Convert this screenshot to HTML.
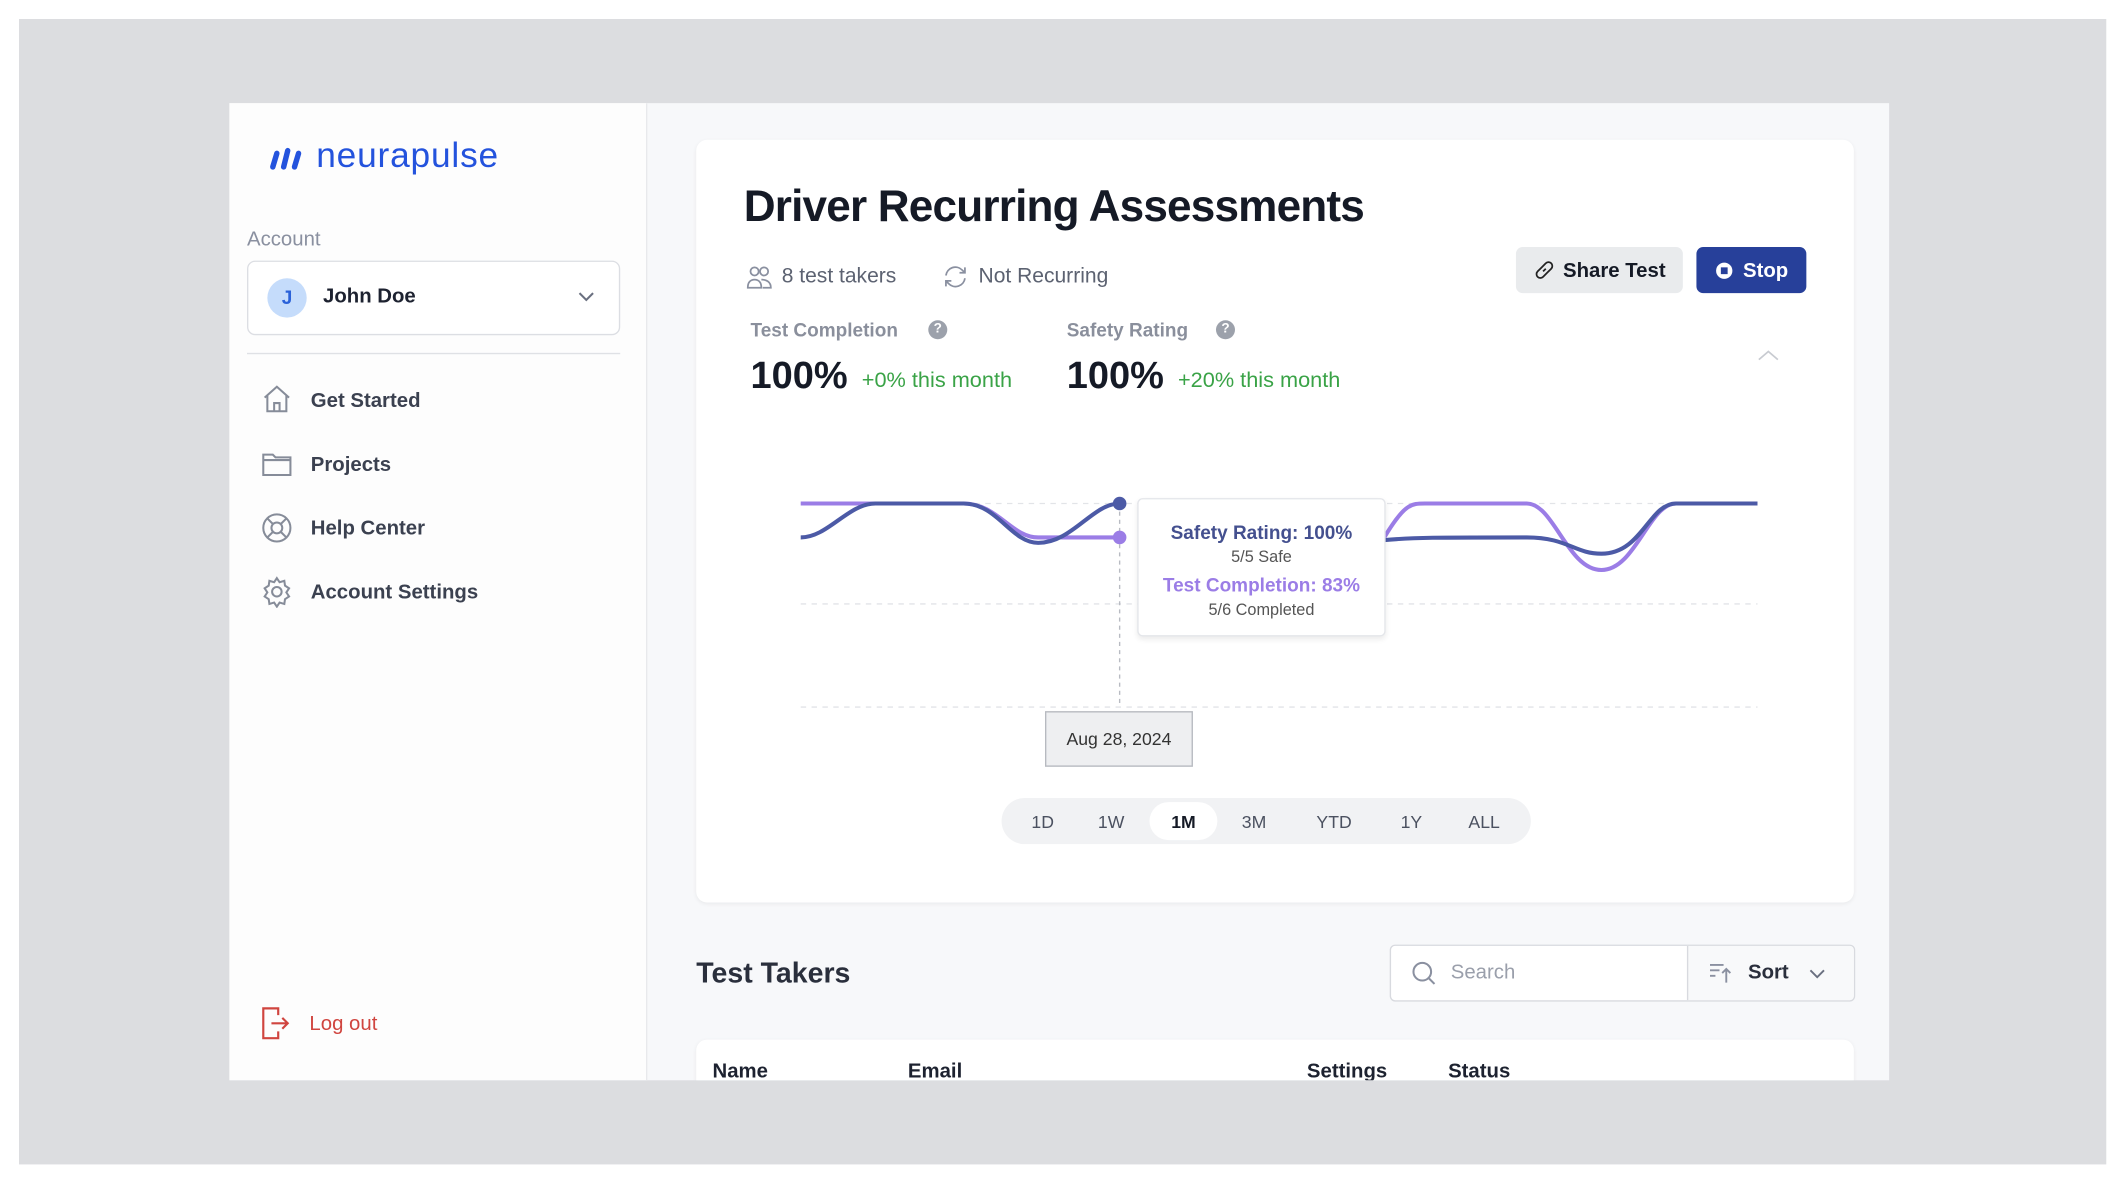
<!DOCTYPE html>
<html><head><meta charset="utf-8">
<style>
html,body{margin:0;padding:0;width:2128px;height:1183px;overflow:hidden;background:#fff;font-family:"Liberation Sans",sans-serif;}
#s{position:absolute;left:0;top:0;width:1568px;height:872px;transform:scale(1.35714);transform-origin:0 0;}
.a{position:absolute;}
.gray{left:14px;top:14px;width:1538px;height:844px;background:#dcdde0;}
.app{left:169px;top:76px;width:1223px;height:720px;background:#f7f8fa;overflow:hidden;}
.side{left:0;top:0;width:307px;height:720px;background:#fdfdfd;border-right:1px solid #e8e9ec;}
.nav{font-size:15px;color:#3b4150;font-weight:bold;}
.card{background:#fff;border-radius:8px;box-shadow:0 1px 3px rgba(0,0,0,.06);}
.btn{border-radius:5px;font-size:15px;font-weight:bold;display:flex;align-items:center;justify-content:center;gap:6px;}
.pill{font-size:13px;color:#4b5160;}
</style></head><body><div id="s">
<div class="a gray"></div>
<div class="a app">
 <div class="a side">
  <svg class="a" style="left:28px;top:30px" width="28" height="20" viewBox="0 0 28 20"><g stroke="#2453dd" stroke-width="4" stroke-linecap="round"><line x1="4" y1="17" x2="7" y2="7"/><line x1="12" y1="17" x2="15" y2="5"/><line x1="20" y1="17" x2="23" y2="7"/></g></svg>
  <div class="a" style="left:64px;top:23px;font-size:26px;color:#2453dd;letter-spacing:.6px">neurapulse</div>
  <div class="a" style="left:13px;top:92px;font-size:15px;color:#8a90a0">Account</div>
  <div class="a" style="left:13px;top:116px;width:273px;height:53px;border:1px solid #dcdee3;border-radius:6px;background:#fff">
   <div class="a" style="left:14px;top:12px;width:29px;height:29px;border-radius:50%;background:#c5dcfb;color:#2b62d9;font-weight:bold;font-size:14px;text-align:center;line-height:29px">J</div>
   <div class="a" style="left:55px;top:17px;font-size:15px;font-weight:bold;color:#1d2230">John Doe</div>
   <svg class="a" style="left:243px;top:22px" width="12" height="8"><path d="M1 1l5 5 5-5" stroke="#6a7080" fill="none" stroke-width="1.5"/></svg>
  </div>
  <div class="a" style="left:13px;top:184px;width:275px;height:1px;background:#dfe1e5"></div>
  <svg class="a" style="left:23px;top:206px" width="24" height="24" viewBox="0 0 24 24" fill="none" stroke="#868c99" stroke-width="1.5"><path d="M3 11L12 3l9 8M5 9v12h14V9M10 21v-6h4v6"/></svg>
  <div class="a nav" style="left:60px;top:211px">Get Started</div>
  <svg class="a" style="left:23px;top:254px" width="24" height="24" viewBox="0 0 24 24" fill="none" stroke="#868c99" stroke-width="1.5"><path d="M2 5h7l2 2h11v13H2zM2 9h20"/></svg>
  <div class="a nav" style="left:60px;top:258px">Projects</div>
  <svg class="a" style="left:23px;top:301px" width="24" height="24" viewBox="0 0 24 24" fill="none" stroke="#868c99" stroke-width="1.5"><circle cx="12" cy="12" r="10"/><circle cx="12" cy="12" r="4"/><path d="M5 5l4 4M19 5l-4 4M5 19l4-4M19 19l-4-4"/></svg>
  <div class="a nav" style="left:60px;top:305px">Help Center</div>
  <svg class="a" style="left:23px;top:348px" width="24" height="24" viewBox="0 0 24 24" fill="none" stroke="#868c99" stroke-width="1.5"><circle cx="12" cy="12" r="3.5"/><path d="M12 2l2 3 3.5-1 .5 3.5 3 2-2 3 2 3-3 2-.5 3.5-3.5-1-2 3-2-3-3.5 1-.5-3.5-3-2 2-3-2-3 3-2 .5-3.5 3.5 1z"/></svg>
  <div class="a nav" style="left:60px;top:352px">Account Settings</div>
  <svg class="a" style="left:23px;top:665px" width="22" height="26" viewBox="0 0 22 26" fill="none" stroke="#d0453f" stroke-width="1.6"><path d="M13 7V2H2v22h11v-5M8 13h12M16 9l4 4-4 4"/></svg>
  <div class="a" style="left:59px;top:670px;font-size:15px;color:#d0453f">Log out</div>
 </div>

 <div class="a card" style="left:344px;top:27px;width:853px;height:562px">
  <div class="a" style="left:35px;top:31px;font-size:32.5px;font-weight:bold;color:#151a26;letter-spacing:-.6px">Driver Recurring Assessments</div>
  <svg class="a" style="left:37px;top:92px" width="20" height="18" viewBox="0 0 20 18" fill="none" stroke="#8a90a0" stroke-width="1.3"><circle cx="6" cy="5" r="3"/><circle cx="13" cy="5" r="3"/><path d="M1 17c0-4 2-6 5-6s5 2 5 6zM11 11c4 0 7 2 7 6h-6"/></svg>
  <div class="a" style="left:63px;top:92px;font-size:15.5px;color:#5c6271">8 test takers</div>
  <svg class="a" style="left:181px;top:91px" width="20" height="20" viewBox="0 0 20 20" fill="none" stroke="#8a90a0" stroke-width="1.3"><path d="M3 9a7 7 0 0 1 12-4l2 2M17 11a7 7 0 0 1-12 4l-2-2M17 3v4h-4M3 17v-4h4"/></svg>
  <div class="a" style="left:208px;top:92px;font-size:15.5px;color:#5c6271">Not Recurring</div>
  <div class="a btn" style="left:604px;top:79px;width:123px;height:34px;background:#e9ebed;color:#151a26"><svg width="16" height="16" viewBox="0 0 16 16" fill="none" stroke="#222" stroke-width="1.3"><path d="M7 9l2-2M6 6l-3 3a2.5 2.5 0 0 0 4 4l3-3M10 10l3-3a2.5 2.5 0 0 0-4-4L6 6"/></svg>Share Test</div>
  <div class="a btn" style="left:737px;top:79px;width:81px;height:34px;background:#27409a;color:#fff"><svg width="15" height="15"><circle cx="7.5" cy="7.5" r="6" fill="#fff"/><rect x="5" y="5" width="5" height="5" fill="#27409a"/></svg>Stop</div>
  <div class="a" style="left:40px;top:132px;font-size:14px;color:#8a8f9c;font-weight:bold">Test Completion</div>
  <div class="a" style="left:171px;top:133px;width:14px;height:14px;border-radius:50%;background:#9ca1ab;color:#fff;font-size:10px;text-align:center;line-height:14px;font-weight:bold">?</div>
  <div class="a" style="left:273px;top:132px;font-size:14px;color:#8a8f9c;font-weight:bold">Safety Rating</div>
  <div class="a" style="left:383px;top:133px;width:14px;height:14px;border-radius:50%;background:#9ca1ab;color:#fff;font-size:10px;text-align:center;line-height:14px;font-weight:bold">?</div>
  <div class="a" style="left:40px;top:158px;font-size:28px;font-weight:bold;color:#151a26">100%</div>
  <div class="a" style="left:122px;top:169px;font-size:16px;color:#3aa347">+0% this month</div>
  <div class="a" style="left:273px;top:158px;font-size:28px;font-weight:bold;color:#151a26">100%</div>
  <div class="a" style="left:355px;top:169px;font-size:16px;color:#3aa347">+20% this month</div>
  <svg class="a" style="left:782px;top:154px" width="16" height="10"><path d="M1 8l7-6 7 6" stroke="#c8cbd1" fill="none" stroke-width="1.3"/></svg>
 </div>

 <svg class="a" style="left:0;top:0" width="1223" height="720">
  <g stroke="#e2e4e8" stroke-dasharray="4 4" stroke-width="1"><line x1="421" y1="295" x2="1126" y2="295"/><line x1="421" y1="369" x2="1126" y2="369"/><line x1="421" y1="445" x2="1126" y2="445"/></g>
  <line x1="656" y1="295" x2="656" y2="444" stroke="#b8bbc2" stroke-dasharray="3 3"/>
  <path d="M421 295 H541 C566 295 576 320 596 320 H656 M851 320 C866 295 871 295 881 295 H956 C976 295 986 344 1011 344 C1036 344 1046 295 1066 295 H1126" stroke="#9b7de6" stroke-width="3" fill="none"/>
  <path d="M421 320 C441 320 456 295 476 295 H541 C566 295 576 324 596 324 C621 324 636 295 656 295 M851 322 C871 320 891 320 956 320 C986 320 991 332 1011 332 C1041 332 1046 295 1066 295 H1126" stroke="#4c5aa6" stroke-width="3" fill="none"/>
  <circle cx="656" cy="295" r="5" fill="#4c5aa6"/><circle cx="656" cy="320" r="5" fill="#9b7de6"/>
 </svg>
 <div class="a" style="left:669px;top:291px;width:181px;height:100px;background:#fff;border:1px solid #e4e6ea;border-radius:4px;box-shadow:0 2px 4px rgba(0,0,0,.08);text-align:center">
  <div style="margin-top:16px;font-size:14px;font-weight:bold;color:#44508f">Safety Rating: 100%</div>
  <div style="font-size:12px;color:#555;margin-top:3px">5/5 Safe</div>
  <div style="font-size:14px;font-weight:bold;color:#9b7de6;margin-top:6px">Test Completion: 83%</div>
  <div style="font-size:12px;color:#555;margin-top:3px">5/6 Completed</div>
 </div>
 <div class="a" style="left:601px;top:448px;width:107px;height:39px;background:#eeeff1;border:1px solid #b7bac0;font-size:13px;color:#333;text-align:center;line-height:39px">Aug 28, 2024</div>
 <div class="a" style="left:569px;top:512px;width:390px;height:34px;background:#f1f2f4;border-radius:17px"></div>
 <div class="a" style="left:678px;top:515px;width:50px;height:28px;background:#fff;border-radius:14px"></div>
 <div class="a pill" style="left:591px;top:522px">1D</div>
 <div class="a pill" style="left:640px;top:522px">1W</div>
 <div class="a pill" style="left:694px;top:522px;color:#151a26;font-weight:bold">1M</div>
 <div class="a pill" style="left:746px;top:522px">3M</div>
 <div class="a pill" style="left:801px;top:522px">YTD</div>
 <div class="a pill" style="left:863px;top:522px">1Y</div>
 <div class="a pill" style="left:913px;top:522px">ALL</div>

 <div class="a" style="left:344px;top:630px;font-size:21px;font-weight:bold;color:#2a2f3c">Test Takers</div>
 <div class="a" style="left:855px;top:620px;width:341px;height:40px;background:#fff;border:1px solid #d8dadf;border-radius:4px;overflow:hidden">
  <svg class="a" style="left:15px;top:11px" width="18" height="18" fill="none" stroke="#8a90a0" stroke-width="1.5"><circle cx="8" cy="8" r="6.5"/><path d="M13 13l4 4"/></svg>
  <div class="a" style="left:44px;top:11px;font-size:15px;color:#9a9fab">Search</div>
  <div class="a" style="left:218px;top:0;width:122px;height:40px;background:#f8f9fa;border-left:1px solid #d8dadf">
   <svg class="a" style="left:15px;top:12px" width="18" height="16" fill="none" stroke="#8a90a0" stroke-width="1.4"><path d="M1 2h10M1 6h7M1 10h4M13 15V5M10 8l3-3 3 3"/></svg>
   <div class="a" style="left:44px;top:11px;font-size:15px;font-weight:bold;color:#2a2f3c">Sort</div>
   <svg class="a" style="left:89px;top:17px" width="12" height="8"><path d="M1 1l5 5 5-5" stroke="#6a7080" fill="none" stroke-width="1.4"/></svg>
  </div>
 </div>
 <div class="a card" style="left:344px;top:690px;width:853px;height:60px"></div>
 <div class="a" style="left:356px;top:705px;font-size:15px;font-weight:bold;color:#1d2230">Name</div>
 <div class="a" style="left:500px;top:705px;font-size:15px;font-weight:bold;color:#1d2230">Email</div>
 <div class="a" style="left:794px;top:705px;font-size:15px;font-weight:bold;color:#1d2230">Settings</div>
 <div class="a" style="left:898px;top:705px;font-size:15px;font-weight:bold;color:#1d2230">Status</div>
</div>
</div></body></html>
